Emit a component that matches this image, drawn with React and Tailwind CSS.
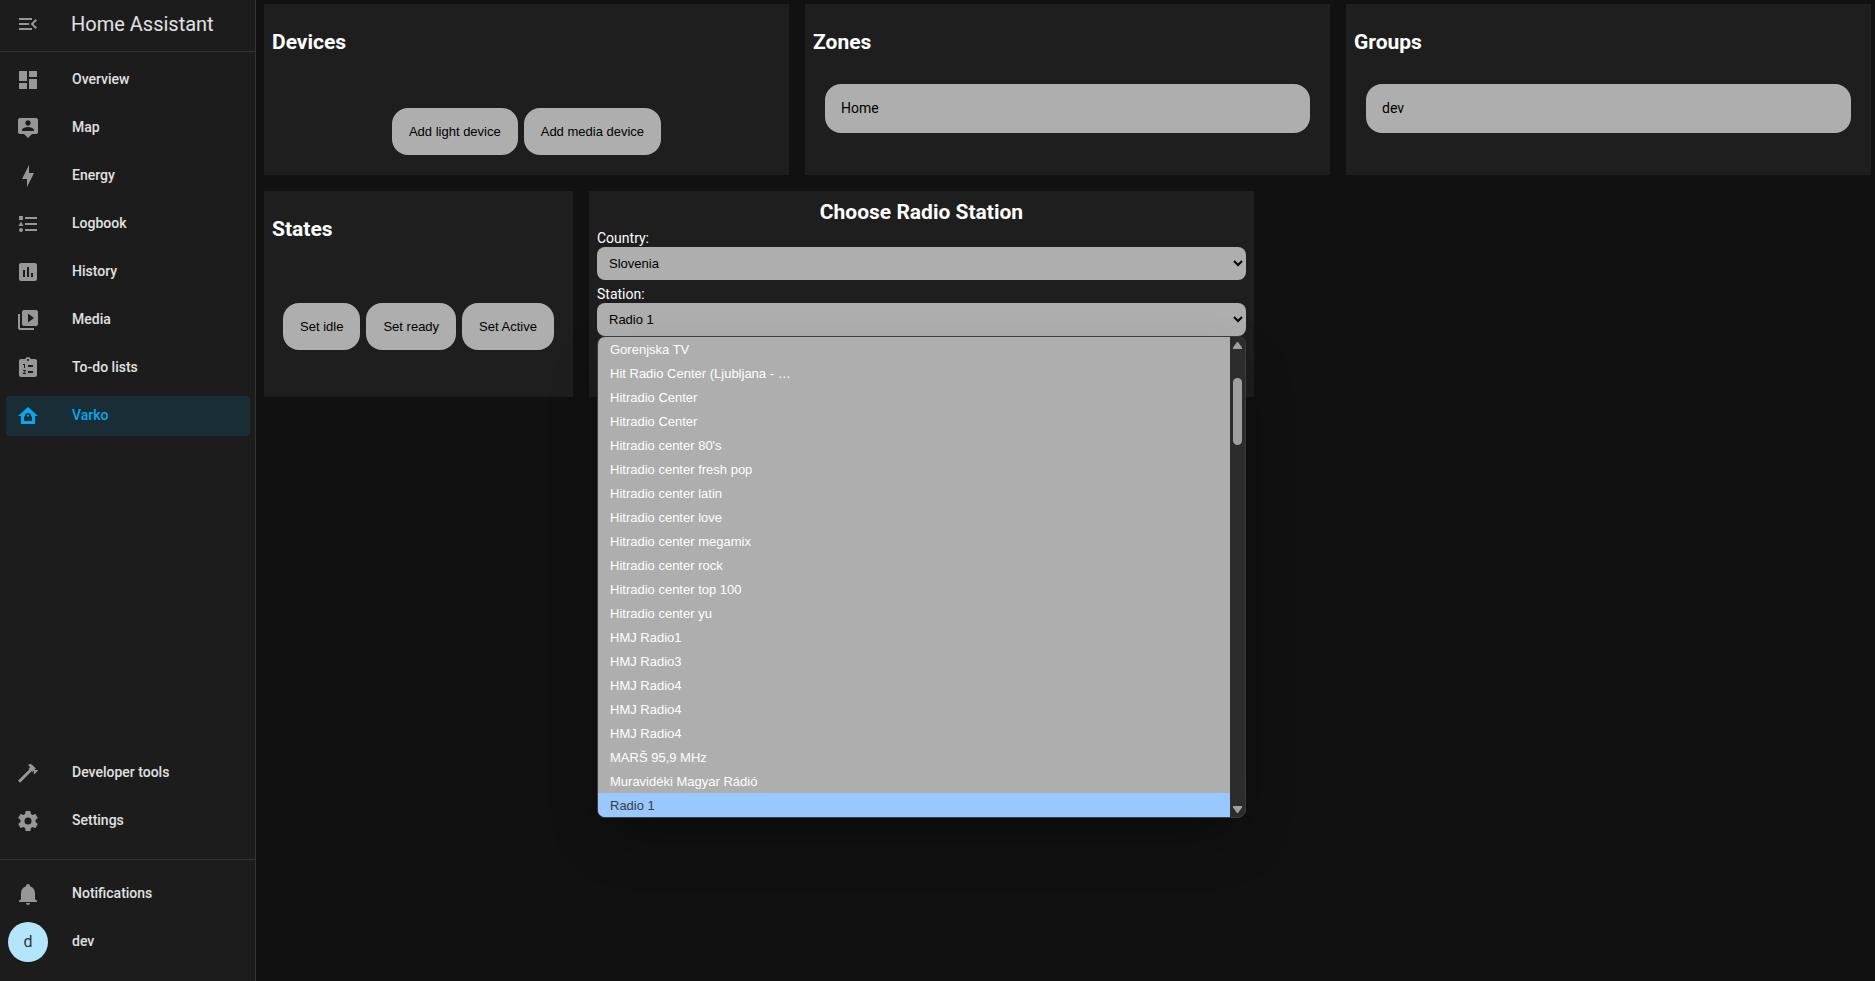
const ICONS = {
  menuOpen: 'M21,15.61L19.59,17L14.58,12L19.59,7L21,8.39L17.44,12L21,15.61M3,6H16V8H3V6M3,13V11H13V13H3M3,18V16H16V18H3Z',
  dashboard: 'M13,3V9H21V3M13,21H21V11H13M3,21H11V15H3M3,13H11V3H3V13Z',
  map: 'M4,2H20A2,2 0 0,1 22,4V16A2,2 0 0,1 20,18H16L12,22L8,18H4A2,2 0 0,1 2,16V4A2,2 0 0,1 4,2M12,4.3C10.5,4.3 9.3,5.5 9.3,7C9.3,8.5 10.5,9.7 12,9.7C13.5,9.7 14.7,8.5 14.7,7C14.7,5.5 13.5,4.3 12,4.3M18,15V14.1C18,12.1 14,11 12,11C10,11 6,12.1 6,14.1V15H18Z',
  energy: 'M11 15H6L13 1V9H18L11 23V15Z',
  logbook: 'M5,9.5L7.5,14H2.5L5,9.5M3,4H7V8H3V4M5,20A2,2 0 0,0 7,18A2,2 0 0,0 5,16A2,2 0 0,0 3,18A2,2 0 0,0 5,20M9,5V7H21V5H9M9,19H21V17H9V19M9,13H21V11H9V13Z',
  history: 'M19 3H5C3.9 3 3 3.9 3 5V19C3 20.1 3.9 21 5 21H19C20.1 21 21 20.1 21 19V5C21 3.9 20.1 3 19 3M9 17H7V10H9V17M13 17H11V7H13V17M17 17H15V13H17V17Z',
  media: 'M4,6H2V20A2,2 0 0,0 4,22H18V20H4V6M20,2H8A2,2 0 0,0 6,4V16A2,2 0 0,0 8,18H20A2,2 0 0,0 22,16V4A2,2 0 0,0 20,2M12,14.5V5.5L18,10L12,14.5Z',
  todo: 'M19 3H14.82C14.4 1.84 13.3 1 12 1S9.6 1.84 9.18 3H5C3.9 3 3 3.9 3 5V19C3 20.1 3.9 21 5 21H19C20.1 21 21 20.1 21 19V5C21 3.9 20.1 3 19 3M7 8H9V12H8V9H7V8M10 17V18H7V17.08L9 15H7V14H9.25C9.66 14 10 14.34 10 14.75C10 14.95 9.92 15.14 9.79 15.27L8.12 17H10M11 4C11 3.45 11.45 3 12 3S13 3.45 13 4 12.55 5 12 5 11 4.55 11 4M17 17H12V15H17V17M17 11H12V9H17V11Z',
  home: 'M12 3L2 12H5V20H19V12H22L12 3M8 17V12.5H9V11.5C9 10 10.3 9 12 9S15 10 15 11.5V12.5H16V17H8M11 12.5H13V11.5C13 11 12.6 10.7 12 10.7S11 11 11 11.5V12.5Z',
  hammer: 'M2 19.63L13.43 8.2L12.72 7.5L14.14 6.07L12 3.89C13.2 2.7 15.09 2.7 16.27 3.89L19.87 7.5L18.45 8.91H21.29L22 9.62L18.45 13.21L17.74 12.5V9.62L16.27 11.04L15.56 10.33L4.13 21.76L2 19.63Z',
  cog: 'M12,15.5A3.5,3.5 0 0,1 8.5,12A3.5,3.5 0 0,1 12,8.5A3.5,3.5 0 0,1 15.5,12A3.5,3.5 0 0,1 12,15.5M19.43,12.97C19.47,12.65 19.5,12.33 19.5,12C19.5,11.67 19.47,11.34 19.43,11L21.54,9.37C21.73,9.22 21.78,8.95 21.66,8.73L19.66,5.27C19.54,5.05 19.27,4.96 19.05,5.05L16.56,6.05C16.04,5.66 15.5,5.32 14.87,5.07L14.5,2.42C14.46,2.18 14.25,2 14,2H10C9.75,2 9.54,2.18 9.5,2.42L9.13,5.07C8.5,5.32 7.96,5.66 7.44,6.05L4.95,5.05C4.73,4.96 4.46,5.05 4.34,5.27L2.34,8.73C2.21,8.95 2.27,9.22 2.46,9.37L4.57,11C4.53,11.34 4.5,11.67 4.5,12C4.5,12.33 4.53,12.65 4.57,12.97L2.46,14.63C2.27,14.78 2.21,15.05 2.34,15.27L4.34,18.73C4.46,18.95 4.73,19.03 4.95,18.95L7.44,17.94C7.96,18.34 8.5,18.68 9.13,18.93L9.5,21.58C9.54,21.82 9.75,22 10,22H14C14.25,22 14.46,21.82 14.5,21.58L14.87,18.93C15.5,18.67 16.04,18.34 16.56,17.94L19.05,18.95C19.27,19.03 19.54,18.95 19.66,18.73L21.66,15.27C21.78,15.05 21.73,14.78 21.54,14.63L19.43,12.97Z',
  bell: 'M21,19V20H3V19L5,17V11C5,7.9 7.03,5.17 10,4.29C10,4.19 10,4.1 10,4A2,2 0 0,1 12,2A2,2 0 0,1 14,4C14,4.1 14,4.19 14,4.29C16.97,5.17 19,7.9 19,11V17L21,19M14,21A2,2 0 0,1 12,23A2,2 0 0,1 10,21',
};

const NAV = [
  ['dashboard', 'Overview'],
  ['map', 'Map'],
  ['energy', 'Energy'],
  ['logbook', 'Logbook'],
  ['history', 'History'],
  ['media', 'Media'],
  ['todo', 'To-do lists'],
  ['home', 'Varko'],
];

const STATIONS = [
  'Gorenjska TV',
  'Hit Radio Center (Ljubljana - …',
  'Hitradio Center',
  'Hitradio Center',
  "Hitradio center 80's",
  'Hitradio center fresh pop',
  'Hitradio center latin',
  'Hitradio center love',
  'Hitradio center megamix',
  'Hitradio center rock',
  'Hitradio center top 100',
  'Hitradio center yu',
  'HMJ Radio1',
  'HMJ Radio3',
  'HMJ Radio4',
  'HMJ Radio4',
  'HMJ Radio4',
  'MARŠ 95,9 MHz',
  'Muravidéki Magyar Rádió',
  'Radio 1',
];

function Icon({ name }) {
  return (
    <svg viewBox="0 0 24 24" className="size-6 shrink-0 fill-current" fillRule="evenodd" aria-hidden="true">
      <path d={ICONS[name]} />
    </svg>
  );
}

function NavItem({ icon, label, active }) {
  return (
    <a
      href="#"
      aria-current={active ? 'page' : undefined}
      className={
        active
          ? 'flex h-10 items-center gap-8 rounded-sm bg-[#192d36] px-[10px] text-[#03a9f4]'
          : 'flex h-10 items-center gap-8 rounded-sm px-[10px] text-[#979797]'
      }
    >
      <Icon name={icon} />
      <span className={active ? 'pb-[2px]' : 'pb-[2px] text-[#e1e1e1]'}>{label}</span>
    </a>
  );
}

function Sidebar() {
  return (
    <aside className="flex w-64 shrink-0 flex-col border-r border-[#343434] bg-[#1c1c1c] text-sm font-medium">
      <header className="flex h-[52px] items-center gap-[31px] border-b border-[#343434] px-4 pb-1">
        <button type="button" aria-label="Collapse sidebar" className="text-[#979797]">
          <Icon name="menuOpen" />
        </button>
        <span className="text-xl font-normal text-[#e1e1e1]">Home Assistant</span>
      </header>
      <nav className="flex flex-1 flex-col gap-2 pt-2 pr-[5px] pb-[18px] pl-[6px]">
        {NAV.map(([icon, label]) => (
          <NavItem key={label} icon={icon} label={label} active={label === 'Varko'} />
        ))}
        <div className="flex-1" />
        <NavItem icon="hammer" label="Developer tools" />
        <NavItem icon="cog" label="Settings" />
      </nav>
      <div className="flex flex-col gap-2 border-t border-[#343434] pt-[14px] pr-[5px] pb-[19px] pl-[6px]">
        <NavItem icon="bell" label="Notifications" />
        <a href="#" className="flex h-10 items-center gap-6 px-[2px] text-[#e1e1e1]">
          <span className="flex size-10 items-center justify-center rounded-full bg-[#b3e5fc] text-base font-normal text-[#333333]">
            d
          </span>
          <span className="pb-[2px]">dev</span>
        </a>
      </div>
    </aside>
  );
}

function Card({ title, className = '', children }) {
  return (
    <section className={`flex flex-col bg-[#1e1e1e] p-2 ${className}`}>
      <h2 className="mt-[18px] mb-[17px] text-[21px] leading-[25px] font-bold text-white">{title}</h2>
      {children}
    </section>
  );
}

function PillButton({ children }) {
  return (
    <button
      type="button"
      className="h-[47px] rounded-2xl bg-[#aeaeae] px-[17px] font-['Liberation_Sans',sans-serif] text-[13px] whitespace-nowrap text-black"
    >
      {children}
    </button>
  );
}

function Entry({ children }) {
  return (
    <button
      type="button"
      className="h-[49px] w-full rounded-2xl bg-[#aeaeae] px-4 pb-[2px] text-left text-sm text-black"
    >
      {children}
    </button>
  );
}

const selectClass =
  "h-[33px] w-full rounded-lg bg-[#aeaeae] px-2 font-['Liberation_Sans',sans-serif] text-[13px] text-black";

function StationList() {
  return (
    <div className="absolute inset-x-0 top-full z-10 flex overflow-hidden rounded-lg border border-[#3c3c3c] bg-[#2c2c2c] shadow-2xl shadow-black/40">
      <ul
        role="listbox"
        aria-label="Stations"
        className="flex-1 bg-[#aeaeae] font-['Liberation_Sans',sans-serif] text-[13px] leading-[26px] text-white"
      >
        {STATIONS.map((name, i) => {
          const selected = i === STATIONS.length - 1;
          return (
            <li
              key={i}
              role="option"
              aria-selected={selected}
              className={selected ? 'h-6 bg-[#99c8ff] px-3 text-[#3b3b3b]' : 'h-6 px-3'}
            >
              {name}
            </li>
          );
        })}
      </ul>
      <div className="flex w-[15px] flex-col items-center pt-[5px] pb-1 text-[#9f9f9f]" aria-hidden="true">
        <svg viewBox="0 0 9 8" className="h-2 w-[9px] fill-current">
          <path d="M4 0h1l4 5.500V7H0V5.500Z" />
        </svg>
        <div className="mt-7 h-[67px] w-[9px] rounded-full bg-[#9f9f9f]" />
        <div className="flex-1" />
        <svg viewBox="0 0 9 8" className="h-2 w-[9px] fill-current">
          <path d="M4 8h1l4-5.500V1H0V2.500Z" />
        </svg>
      </div>
    </div>
  );
}

function RadioCard() {
  return (
    <section className="w-[665px] bg-[#1e1e1e] px-2 pt-[9px] pb-[61px] text-sm text-white">
      <h2 className="mb-[5px] text-center text-[21px] leading-[25px] font-bold">Choose Radio Station</h2>
      <label htmlFor="country" className="block leading-[17px]">
        Country:
      </label>
      <select id="country" className={`mb-[6px] block ${selectClass}`} defaultValue="Slovenia">
        <option>Slovenia</option>
      </select>
      <label htmlFor="station" className="block leading-[17px]">
        Station:
      </label>
      <div className="relative">
        <select id="station" className={`block ${selectClass}`} defaultValue="Radio 1">
          <option>Radio 1</option>
        </select>
        <StationList />
      </div>
    </section>
  );
}

export default function App() {
  return (
    <div className="flex min-h-screen bg-[#111111] font-['Roboto',sans-serif]">
      <Sidebar />
      <main className="flex min-w-0 flex-1 flex-col gap-4 pt-1 pr-1 pl-2">
        <div className="grid grid-cols-3 gap-4">
          <Card title="Devices">
            <div className="flex min-h-[95px] items-end justify-center gap-[6px] p-3">
              <PillButton>Add light device</PillButton>
              <PillButton>Add media device</PillButton>
            </div>
          </Card>
          <Card title="Zones">
            <div className="p-3">
              <Entry>Home</Entry>
            </div>
          </Card>
          <Card title="Groups">
            <div className="p-3">
              <Entry>dev</Entry>
            </div>
          </Card>
        </div>
        <div className="flex flex-wrap gap-4">
          <Card title="States" className="w-[309px]">
            <div className="flex flex-1 items-center justify-center gap-[6px] pt-4 pb-[11px]">
              <PillButton>Set idle</PillButton>
              <PillButton>Set ready</PillButton>
              <PillButton>Set Active</PillButton>
            </div>
          </Card>
          <RadioCard />
        </div>
      </main>
    </div>
  );
}
